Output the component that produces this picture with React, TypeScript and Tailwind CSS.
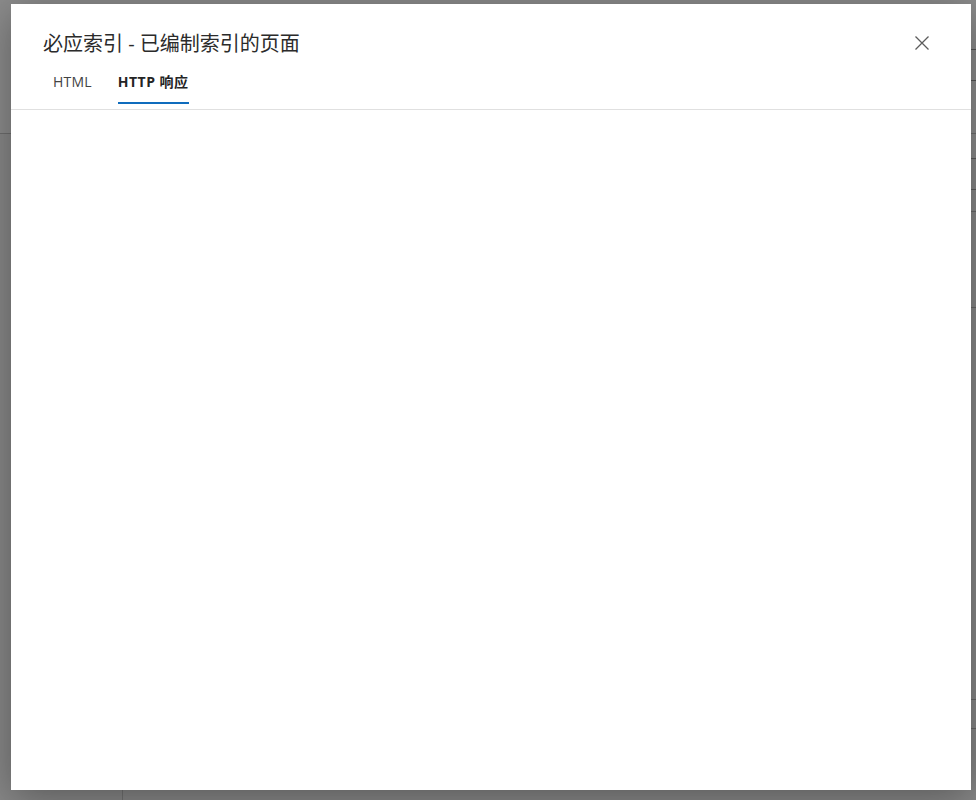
import React from 'react';

const font = { fontFamily: '"Open Sans", "Noto Sans CJK SC", sans-serif' };

const CloseIcon = () => (
    <svg width="14" height="14" viewBox="0 0 14 14" fill="none">
        <path d="M0.5 0.5 L13.5 13.5 M13.5 0.5 L0.5 13.5" stroke="#5c5c5c" strokeWidth="1.3" />
    </svg>
);

// page sitting behind the modal, mostly hidden
const BackPage = () => (
    <div className="flex h-full w-full flex-col bg-[#f7f7f7]">
        <div className="flex h-[134px] shrink-0 border-b border-[#c8c8c8] bg-white">
            <div className="flex-1" />
            <div className="w-[40px] pt-[49px]">
                <div className="flex h-[32px] items-center border-y border-[#9a9a9a] pl-[1px]">
                    <svg width="8" height="14" viewBox="0 0 8 14" fill="none">
                        <path d="M7 1 L1 7 L7 13" stroke="#666" strokeWidth="1.2" />
                    </svg>
                </div>
            </div>
        </div>
        <div className="flex flex-1">
            <div className="w-[123px] border-r border-[#cfcfcf]" />
            <div className="flex flex-1 justify-end">
                <div className="w-[40px]">
                    <div className="h-[25px] border-b border-[#a8a8a8] bg-white" />
                    <div className="h-[31px] border-b border-[#a8a8a8]" />
                    <div className="h-[22px] border-b border-[#bdbdbd]" />
                    <div className="h-[96px] border-b border-[#bdbdbd]" />
                    <div className="h-[392px] border-b border-[#bdbdbd]" />
                    <div className="h-[29px] border-b border-[#bdbdbd]" />
                </div>
            </div>
        </div>
    </div>
);

const App = () => {
    return (
        <div className="relative h-[800px] w-[976px] overflow-hidden" style={font}>
            <BackPage />
            <div className="absolute inset-0 bg-black/45" />
            <div className="absolute left-[11px] top-[4px] flex h-[786px] w-[960px] flex-col bg-white shadow-[0_8px_40px_rgba(0,0,0,0.35)]">
                <div className="border-b border-[#e0e0e0]">
                    <div className="mt-[24px] flex h-[28px] items-center justify-between pl-[32px] pr-[35px]">
                        <h2 className="pt-[4px] text-[20px] leading-[28px] text-[#2b2b2b]">必应索引 - 已编制索引的页面</h2>
                        <button className="mt-[2px] flex h-[28px] w-[28px] items-center justify-center">
                            <CloseIcon />
                        </button>
                    </div>
                    <div className="flex gap-[26px] pl-[42px] pt-[16px] pb-[5px]">
                        <div className="flex flex-col">
                            <span className="text-[14px] leading-[20px] tracking-[0.2px] text-[#424242]">HTML</span>
                            <span className="mt-[10px] h-[2px]" />
                        </div>
                        <div className="flex flex-col">
                            <span className="text-[14px] font-bold leading-[20px] tracking-[0.5px] text-[#242424]">HTTP 响应</span>
                            <span className="mt-[10px] h-[2px] bg-[#0f6cbd]" />
                        </div>
                    </div>
                </div>
                <div className="flex-1" />
            </div>
        </div>
    );
};

export default App;
